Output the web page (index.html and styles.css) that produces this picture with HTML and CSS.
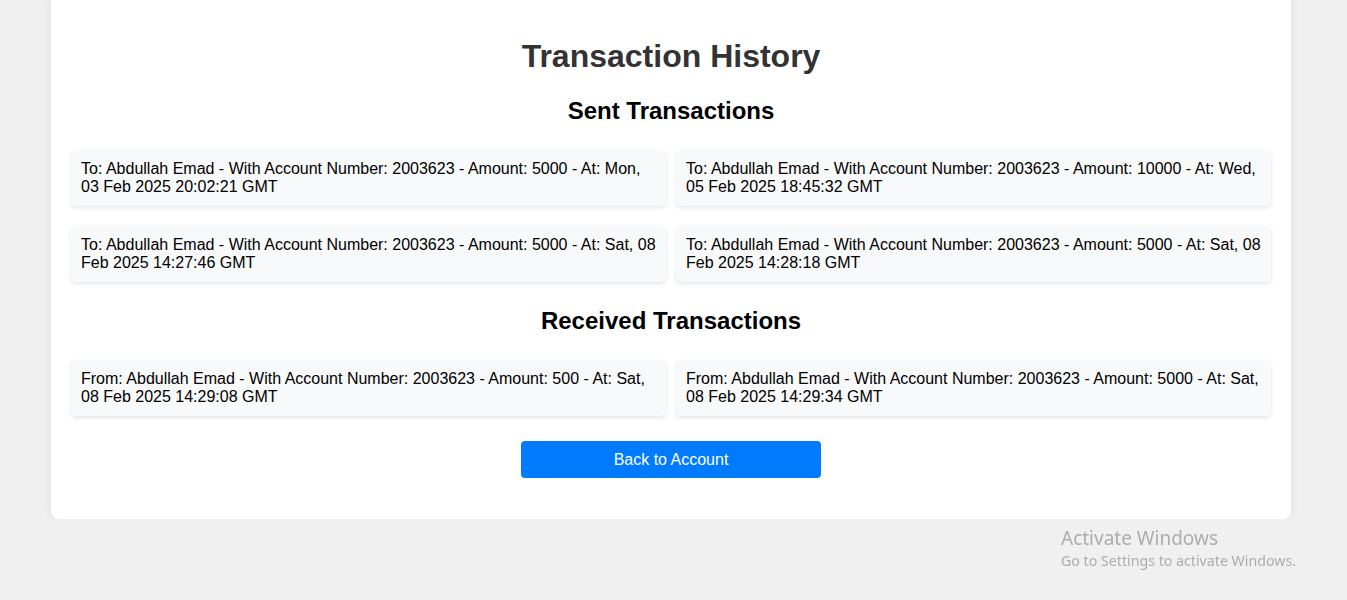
FILE: index.html
```html
<!DOCTYPE html>
<html lang="en">
<head>
<meta charset="utf-8">
<title>Transaction History</title>
<link rel="stylesheet" href="styles.css">
</head>
<body>
<div class="container">
  <h1 class="title">Transaction History</h1>
  <h2 class="section-title">Sent Transactions</h2>
  <ul class="tx-list">
    <li class="tx-card">To: Abdullah Emad - With Account Number: 2003623 - Amount: 5000 - At: Mon, 03 Feb 2025 20:02:21 GMT</li>
    <li class="tx-card">To: Abdullah Emad - With Account Number: 2003623 - Amount: 10000 - At: Wed, 05 Feb 2025 18:45:32 GMT</li>
    <li class="tx-card">To: Abdullah Emad - With Account Number: 2003623 - Amount: 5000 - At: Sat, 08 Feb 2025 14:27:46 GMT</li>
    <li class="tx-card">To: Abdullah Emad - With Account Number: 2003623 - Amount: 5000 - At: Sat, 08 Feb 2025 14:28:18 GMT</li>
  </ul>
  <h2 class="section-title received">Received Transactions</h2>
  <ul class="tx-list">
    <li class="tx-card">From: Abdullah Emad - With Account Number: 2003623 - Amount: 500 - At: Sat, 08 Feb 2025 14:29:08 GMT</li>
    <li class="tx-card">From: Abdullah Emad - With Account Number: 2003623 - Amount: 5000 - At: Sat, 08 Feb 2025 14:29:34 GMT</li>
  </ul>
  <div class="actions">
    <a class="btn" href="#">Back to Account</a>
  </div>
</div>
<div class="watermark">
  <div class="wm-title">Activate Windows</div>
  <div class="wm-sub">Go to Settings to activate Windows.</div>
</div>
</body>
</html>
```
FILE: styles.css
```css
html, body {
  margin: 0;
  padding: 0;
}
body {
  background: #f0f0f0;
  font-family: "Liberation Sans", Arial, sans-serif;
  color: #000;
}
.container {
  width: 1240px;
  box-sizing: border-box;
  margin: 0 0 0 51px;
  background: #fff;
  border-radius: 0 0 8px 8px;
  box-shadow: 0 0 10px rgba(0,0,0,0.08);
  padding: 38px 20px 41px;
}
.title {
  margin: 0;
  text-align: center;
  font-size: 32px;
  line-height: 37px;
  font-weight: bold;
  color: #333;
}
.section-title {
  margin: 22px 0 0;
  text-align: center;
  font-size: 24px;
  line-height: 28px;
  font-weight: bold;
  color: #000;
}
.section-title.received {
  margin-top: 25px;
}
.tx-list {
  list-style: none;
  margin: 25px 0 0;
  padding: 0;
  display: grid;
  grid-template-columns: 1fr 1fr;
  column-gap: 10px;
  row-gap: 20px;
}
.tx-card {
  background: #f8f9fa;
  border-radius: 5px;
  box-shadow: 0 2px 4px rgba(0,0,0,0.1);
  padding: 10px;
  font-size: 16px;
  line-height: 18px;
  color: #000;
}
.actions {
  margin-top: 25px;
  display: flex;
  justify-content: center;
}
.btn {
  display: block;
  width: 300px;
  height: 37px;
  line-height: 37px;
  background: #007bff;
  color: #fff;
  text-align: center;
  text-decoration: none;
  border-radius: 4px;
  font-size: 16px;
}
.watermark {
  position: fixed;
  left: 1061px;
  top: 526px;
  font-family: "Noto Sans", "Open Sans", sans-serif;
  color: rgba(150,150,150,0.75);
}
.wm-title {
  font-size: 19px;
  line-height: 24px;
}
.wm-sub {
  font-size: 14.2px;
  line-height: 21px;
}
```
